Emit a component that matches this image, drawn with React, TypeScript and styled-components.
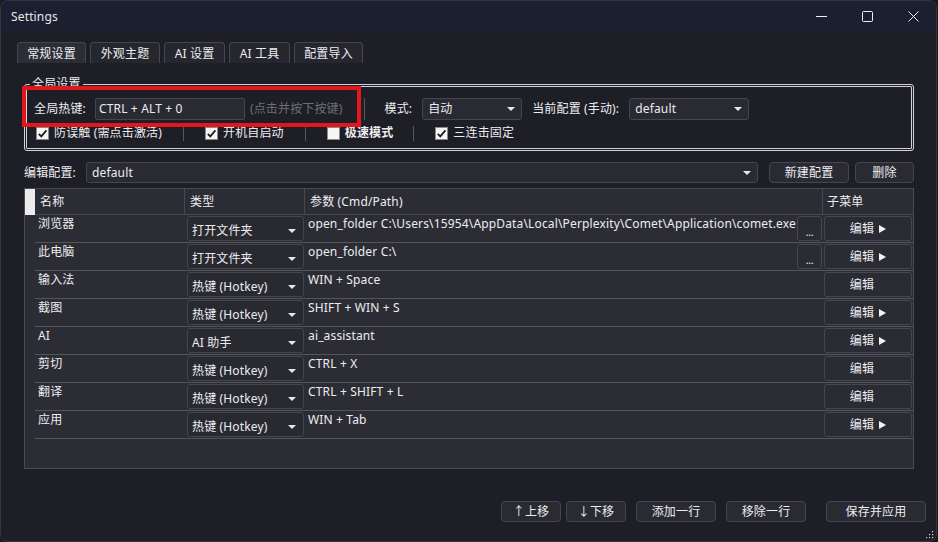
import React from "react";
import styled, { createGlobalStyle } from "styled-components";

const GlobalStyle = createGlobalStyle`
  html, body { margin: 0; padding: 0; background: #1a1a1f; }
  body {
    font-family: "Noto Sans", "Noto Sans CJK SC", sans-serif;
    font-size: 12px;
    letter-spacing: 0.15px;
    color: #ececf0;
  }
  * { box-sizing: border-box; }
`;

const Window = styled.div`
  position: relative;
  width: 937px;
  height: 542px;
  background: #1e1e26;
  border: 1px solid #35353c;
  border-radius: 8px;
  overflow: hidden;
  display: flex;
  flex-direction: column;
`;

const TitleBar = styled.div`
  flex: none;
  height: 30px;
  background: #1b1f2f;
  display: flex;
  align-items: center;
`;

const Title = styled.div`
  flex: 1;
  padding: 1px 0 0 10px;
  color: #e6e6ea;
  line-height: 16px;
`;

const CtrlBtn = styled.div`
  width: 46px;
  height: 30px;
  display: flex;
  align-items: center;
  justify-content: center;
`;

const Body = styled.div`
  flex: 1;
  display: flex;
  flex-direction: column;
  padding: 11px 10px 0 16px;
`;

const TabBar = styled.div`
  display: flex;
  gap: 4px;
  height: 21px;
`;

const Tab = styled.div<{ $w: number; $active?: boolean }>`
  width: ${(p) => p.$w}px;
  height: 21px;
  border: 1px solid #46464f;
  border-bottom: none;
  border-radius: 4px 4px 0 0;
  background: ${(p) => (p.$active ? "#2d2d36" : "#26262e")};
  display: flex;
  align-items: center;
  justify-content: center;
  padding-top: 1px;
  line-height: 16px;
`;

const Pane = styled.div`
  display: flex;
  flex-direction: column;
  padding: 21px 12px 0 7px;
`;

const Group = styled.div`
  position: relative;
  border: 3px double #d2d2d8;
  border-radius: 3px;
  padding: 10px 7px 7px 7px;
`;

const GroupTitle = styled.div`
  position: absolute;
  top: -11px;
  left: 3px;
  padding: 0 2px;
  background: #1e1e26;
  line-height: 16px;
`;

const RedMark = styled.div`
  position: absolute;
  left: -5px;
  top: -1px;
  width: 339px;
  height: 41px;
  border: 4px solid #e2161c;
  pointer-events: none;
  z-index: 2;
`;

const Row1 = styled.div`
  display: flex;
  align-items: center;
  height: 24px;
`;

const Row2 = styled.div`
  display: flex;
  align-items: center;
  height: 16px;
  margin-top: 4px;
  padding-left: 2px;
`;

const Label = styled.span<{ $ml?: number }>`
  margin-left: ${(p) => p.$ml ?? 0}px;
  line-height: 16px;
  white-space: nowrap;
`;

const Hint = styled.span`
  margin-left: 5px;
  color: #6e6e78;
  line-height: 16px;
  white-space: nowrap;
`;

const HotkeyInput = styled.div`
  width: 150px;
  height: 22px;
  margin-left: 9px;
  background: #2a2a33;
  border: 1px solid #45454e;
  border-radius: 2px;
  padding: 0 3px;
  display: flex;
  align-items: center;
  line-height: 16px;
`;

const VSep = styled.div<{ $h: number; $ml?: number; $mr?: number }>`
  width: 1px;
  height: ${(p) => p.$h}px;
  background: #56565e;
  margin: 0 ${(p) => p.$mr ?? 21}px 0 ${(p) => p.$ml ?? 21}px;
`;

const Combo = styled.div<{ $w?: number; $h: number; $ml?: number }>`
  ${(p) => (p.$w ? `width: ${p.$w}px;` : "flex: 1;")}
  height: ${(p) => p.$h}px;
  margin-left: ${(p) => p.$ml ?? 0}px;
  background: #2a2a33;
  border: 1px solid #45454e;
  border-radius: 3px;
  padding: 0 6px 0 5px;
  display: flex;
  align-items: center;
  justify-content: space-between;
  line-height: 16px;
`;

const Arrow = styled.span`
  width: 0;
  height: 0;
  border-left: 4px solid transparent;
  border-right: 4px solid transparent;
  border-top: 4px solid #e8e8ec;
`;

const CheckItem = styled.label`
  display: flex;
  align-items: center;
  gap: 5px;
`;

const Box = styled.span`
  width: 13px;
  height: 13px;
  background: #f5f5f5;
  border: 1px solid #8a8a90;
  display: flex;
  align-items: center;
  justify-content: center;
`;

const CheckText = styled.span<{ $bold?: boolean }>`
  font-weight: ${(p) => (p.$bold ? 700 : 400)};
  line-height: 16px;
  white-space: nowrap;
`;

const EditRow = styled.div`
  display: flex;
  align-items: center;
  margin-top: 11px;
  height: 21px;
`;

const Btn = styled.div<{ $w: number; $ml?: number; $h?: number }>`
  width: ${(p) => p.$w}px;
  height: ${(p) => p.$h ?? 21}px;
  margin-left: ${(p) => p.$ml ?? 0}px;
  flex: none;
  background: #2a2a32;
  border: 1px solid #46464f;
  border-radius: 4px;
  display: flex;
  align-items: center;
  justify-content: center;
  line-height: 16px;
  white-space: nowrap;
`;

const Table = styled.div`
  margin-top: 5px;
  height: 281px;
  border: 1px solid #4a4a53;
  background: #2c2c35;
  overflow: hidden;
`;

const GridRow = styled.div<{ $h: number }>`
  display: grid;
  grid-template-columns: 10px 150px 120px 518px 90px;
  height: ${(p) => p.$h}px;
`;

const Corner = styled.div`
  background: #ececec;
`;

const HeadCell = styled.div<{ $last?: boolean; $pl?: number }>`
  border-bottom: 1px solid #47474f;
  border-right: ${(p) => (p.$last ? "none" : "1px solid #47474f")};
  padding-left: ${(p) => p.$pl ?? 5}px;
  display: flex;
  align-items: center;
  line-height: 16px;
`;

const RowHead = styled.div``;

const Cell = styled.div`
  border-bottom: 1px solid #55555c;
  display: flex;
  min-width: 0;
`;

const TextCell = styled(Cell)`
  padding: 1px 3px 0;
  line-height: 16px;
`;

const ParamText = styled.span`
  flex: 1;
  min-width: 0;
  overflow: hidden;
  white-space: nowrap;
  padding: 1px 0 0 3px;
  line-height: 16px;
`;

const TypeCombo = styled.div`
  width: 117px;
  height: 25px;
  margin: 1px 0 0 2px;
  background: #292930;
  border: 1px solid #45454e;
  border-radius: 3px;
  padding: 4px 7px 0 4px;
  display: flex;
  align-items: center;
  justify-content: space-between;
  line-height: 16px;
`;

const CellBtn = styled.div<{ $w: number; $ml?: number; $mr?: number }>`
  width: ${(p) => p.$w}px;
  height: 25px;
  flex: none;
  margin: 1px ${(p) => p.$mr ?? 0}px 0 ${(p) => p.$ml ?? 0}px;
  background: #2b2b33;
  border: 1px solid #46464f;
  border-radius: 3px;
  display: flex;
  align-items: center;
  justify-content: center;
  line-height: 16px;
`;

const Dots = styled.span`
  padding-top: 6px;
  font-size: 11px;
  letter-spacing: -0.5px;
`;

const SubArrow = styled.span<{ $show: boolean }>`
  width: 0;
  height: 0;
  margin-left: 5px;
  border-top: 4px solid transparent;
  border-bottom: 4px solid transparent;
  border-left: 7px solid #f2f2f2;
  visibility: ${(p) => (p.$show ? "visible" : "hidden")};
`;

const Footer = styled.div`
  display: flex;
  justify-content: flex-end;
  margin-top: 32px;
`;

const Grip = styled.svg`
  position: absolute;
  right: 2px;
  bottom: 2px;
`;

const CheckMark = () => (
  <svg width="11" height="11" viewBox="0 0 11 11">
    <path d="M1.8 5.8 L4.3 8.4 L9.4 2.4" fill="none" stroke="#1c1c1c" strokeWidth="1.7" />
  </svg>
);

const Check = ({ checked, text, bold }: { checked: boolean; text: string; bold?: boolean }) => (
  <CheckItem>
    <Box>{checked && <CheckMark />}</Box>
    <CheckText $bold={bold}>{text}</CheckText>
  </CheckItem>
);

type RowData = { name: string; type: string; param: string; dots?: boolean; sub: boolean };

const rows: RowData[] = [
  {
    name: "浏览器",
    type: "打开文件夹",
    param: "open_folder C:\\Users\\15954\\AppData\\Local\\Perplexity\\Comet\\Application\\comet.exe",
    dots: true,
    sub: true,
  },
  { name: "此电脑", type: "打开文件夹", param: "open_folder C:\\", dots: true, sub: true },
  { name: "输入法", type: "热键 (Hotkey)", param: "WIN + Space", sub: false },
  { name: "截图", type: "热键 (Hotkey)", param: "SHIFT + WIN + S", sub: true },
  { name: "AI", type: "AI 助手", param: "ai_assistant", sub: true },
  { name: "剪切", type: "热键 (Hotkey)", param: "CTRL + X", sub: false },
  { name: "翻译", type: "热键 (Hotkey)", param: "CTRL + SHIFT + L", sub: false },
  { name: "应用", type: "热键 (Hotkey)", param: "WIN + Tab", sub: true },
];

export default function App() {
  return (
    <>
      <GlobalStyle />
      <Window>
        <TitleBar>
          <Title>Settings</Title>
          <CtrlBtn>
            <svg width="11" height="11" viewBox="0 0 11 11">
              <line x1="0" y1="5.5" x2="11" y2="5.5" stroke="#f0f0f0" strokeWidth="1" />
            </svg>
          </CtrlBtn>
          <CtrlBtn>
            <svg width="11" height="11" viewBox="0 0 11 11">
              <rect x="0.5" y="0.5" width="10" height="10" rx="1" fill="none" stroke="#f0f0f0" strokeWidth="1" />
            </svg>
          </CtrlBtn>
          <CtrlBtn>
            <svg width="11" height="11" viewBox="0 0 11 11">
              <path d="M0.5 0.5 L10.5 10.5 M10.5 0.5 L0.5 10.5" stroke="#f0f0f0" strokeWidth="1" />
            </svg>
          </CtrlBtn>
        </TitleBar>
        <Body>
          <TabBar>
            <Tab $w={69} $active>常规设置</Tab>
            <Tab $w={70}>外观主题</Tab>
            <Tab $w={61}>AI 设置</Tab>
            <Tab $w={61}>AI 工具</Tab>
            <Tab $w={69}>配置导入</Tab>
          </TabBar>
          <Pane>
            <Group>
              <GroupTitle>全局设置</GroupTitle>
              <RedMark />
              <Row1>
                <Label>全局热键:</Label>
                <HotkeyInput>CTRL + ALT + 0</HotkeyInput>
                <Hint>(点击并按下按键)</Hint>
                <VSep $h={22} $ml={21} $mr={20} />
                <Label>模式:</Label>
                <Combo $w={100} $h={22} $ml={10}>
                  <span>自动</span>
                  <Arrow />
                </Combo>
                <Label $ml={10}>当前配置 (手动):</Label>
                <Combo $w={120} $h={22} $ml={10}>
                  <span>default</span>
                  <Arrow />
                </Combo>
              </Row1>
              <Row2>
                <Check checked text="防误触 (需点击激活)" />
                <VSep $h={15} />
                <Check checked text="开机自启动" />
                <VSep $h={15} />
                <Check checked={false} text="极速模式" bold />
                <VSep $h={15} $ml={20} />
                <Check checked text="三连击固定" />
              </Row2>
            </Group>
            <EditRow>
              <Label>编辑配置:</Label>
              <Combo $h={21} $ml={10}>
                <span>default</span>
                <Arrow />
              </Combo>
              <Btn $w={80} $ml={11}>新建配置</Btn>
              <Btn $w={59} $ml={6}>删除</Btn>
            </EditRow>
            <Table>
              <GridRow $h={26}>
                <Corner />
                <HeadCell>名称</HeadCell>
                <HeadCell>类型</HeadCell>
                <HeadCell>参数 (Cmd/Path)</HeadCell>
                <HeadCell $last $pl={4}>子菜单</HeadCell>
              </GridRow>
              {rows.map((r) => (
                <GridRow $h={28} key={r.name}>
                  <RowHead />
                  <TextCell>{r.name}</TextCell>
                  <Cell>
                    <TypeCombo>
                      <span>{r.type}</span>
                      <Arrow />
                    </TypeCombo>
                  </Cell>
                  <Cell>
                    <ParamText>{r.param}</ParamText>
                    {r.dots && (
                      <CellBtn $w={25} $mr={1}>
                        <Dots>...</Dots>
                      </CellBtn>
                    )}
                  </Cell>
                  <Cell>
                    <CellBtn $w={88} $ml={1}>
                      <span>编辑</span>
                      <SubArrow $show={r.sub} />
                    </CellBtn>
                  </Cell>
                </GridRow>
              ))}
            </Table>
          </Pane>
          <Footer>
            <Btn $w={60}>↑上移</Btn>
            <Btn $w={60} $ml={5}>↓下移</Btn>
            <Btn $w={80} $ml={10}>添加一行</Btn>
            <Btn $w={80} $ml={10}>移除一行</Btn>
            <Btn $w={100} $ml={20}>保存并应用</Btn>
          </Footer>
        </Body>
        <Grip width="10" height="10" viewBox="0 0 10 10">
          {[
            [8, 2],
            [8, 5],
            [5, 5],
            [8, 8],
            [5, 8],
            [2, 8],
          ].map(([x, y]) => (
            <rect key={`${x}-${y}`} x={x} y={y} width="1.2" height="1.2" fill="#cfcfd4" />
          ))}
        </Grip>
      </Window>
    </>
  );
}
